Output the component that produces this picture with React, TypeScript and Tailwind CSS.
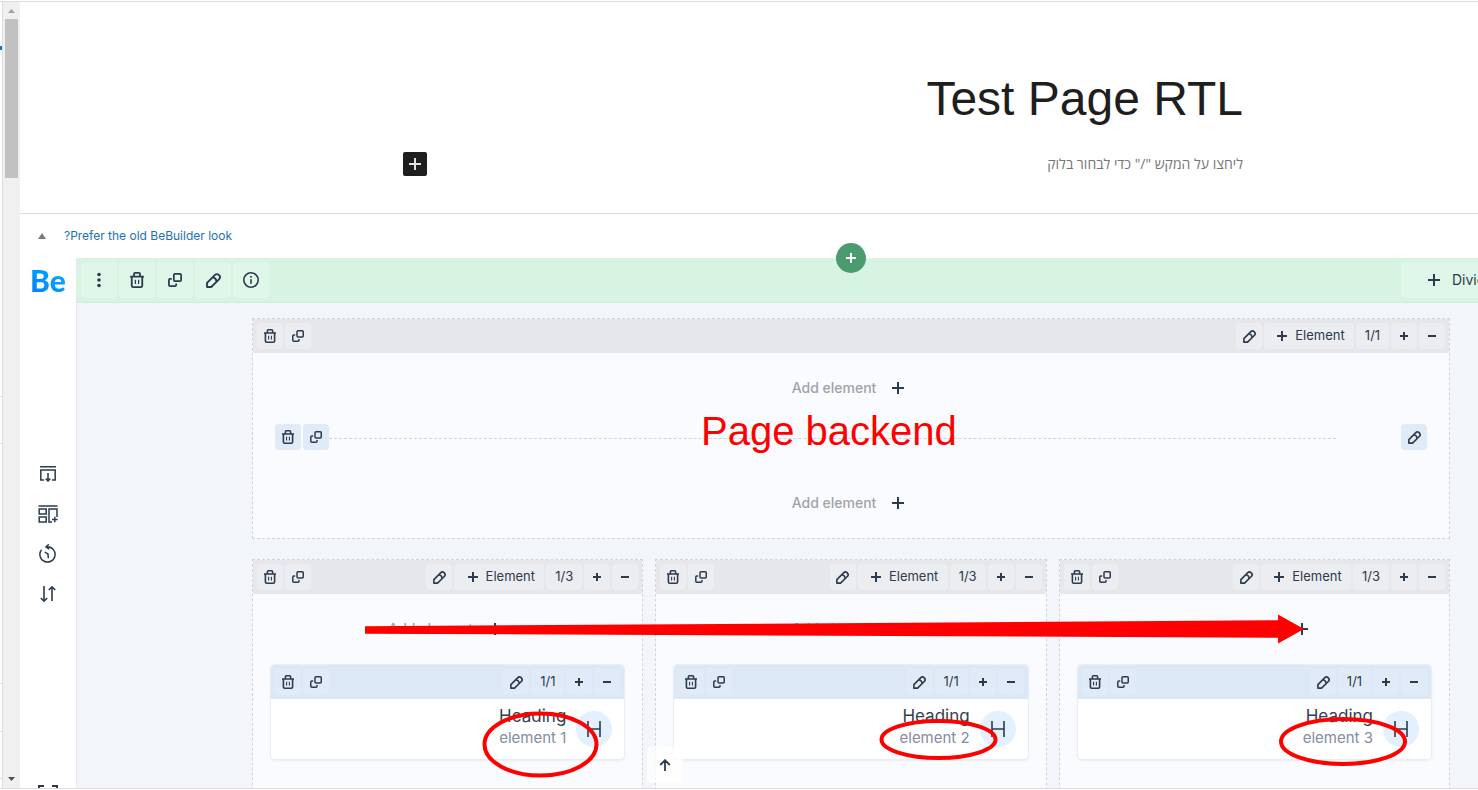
import type { ReactNode } from 'react';

type Tone = 'green' | 'gray' | 'blue';

const toneClasses: Record<Tone, string> = {
  green: 'h-9 w-9 rounded bg-[#dff7e9]',
  gray: 'h-[26px] w-[26px] rounded bg-[#ecedf1]',
  blue: 'h-[26px] w-[26px] rounded bg-[#e1ebf8]',
};

const columns = [1, 2, 3];

function Trash({ size = 14 }: { size?: number }) {
  return (
    <svg width={size} height={size} viewBox="0 0 14 14" fill="none" stroke="currentColor" strokeWidth="1.6">
      <path d="M1 4h12M4.4 4V1.7q0-.9.9-.9h3.4q.9 0 .9.9V4" />
      <path d="M2.4 4v8q0 1.2 1.3 1.2h6.6q1.3 0 1.3-1.2V4" />
      <path d="M5.6 6.8v3.6M8.4 6.8v3.6" strokeWidth="1.1" />
    </svg>
  );
}

function Clone({ size = 12 }: { size?: number }) {
  return (
    <svg width={size} height={size} viewBox="0 0 12 12" fill="none" stroke="currentColor" strokeWidth="1.5">
      <rect x="5" y=".75" width="6.25" height="6.25" rx="1" />
      <path d="M3.2 5H1.8q-1 0-1 1v4.2q0 1 1 1H6q1 0 1-1V9" />
    </svg>
  );
}

function Pencil({ size = 13 }: { size?: number }) {
  return (
    <svg width={size} height={size} viewBox="0 0 12 12" fill="none" stroke="currentColor" strokeWidth="1.5" strokeLinejoin="round">
      <path d="M.8 11.2V7.9L7 1.7q1.7-1.7 3.4 0t0 3.4L4.2 11.2Z" />
      <path d="M5.4 3.5q2.6.3 3 3.2" />
    </svg>
  );
}

function Plus({ size = 10 }: { size?: number }) {
  return (
    <svg width={size} height={size} viewBox={`0 0 ${size} ${size}`} stroke="currentColor" strokeWidth="2" className="shrink-0">
      <path d={`M0 ${size / 2}h${size}M${size / 2} 0v${size}`} />
    </svg>
  );
}

function Minus() {
  return (
    <svg width="8" height="8" viewBox="0 0 8 8" stroke="currentColor" strokeWidth="2">
      <path d="M0 4h8" />
    </svg>
  );
}

function ToolButton({ tone, label, children }: { tone: Tone; label: string; children: ReactNode }) {
  return (
    <button type="button" aria-label={label} className={`flex shrink-0 items-center justify-center ${toneClasses[tone]}`}>
      {children}
    </button>
  );
}

function AddElement() {
  return (
    <div className="flex h-[70px] items-center justify-center">
      <button type="button" className="flex items-center gap-4 pr-1.5 text-sm font-medium text-[#9ea3ac]">
        Add element
        <span className="text-[#2c3b4d]">
          <Plus size={12} />
        </span>
      </button>
    </div>
  );
}

function Toolbar({ tone, size, withElement }: { tone: 'gray' | 'blue'; size: string; withElement?: boolean }) {
  return (
    <div className={`flex h-[34px] items-center justify-between px-1 ${tone === 'gray' ? 'bg-[#e6e7ea]' : 'rounded-t bg-[#dce8f6]'}`}>
      <div className="flex gap-0.5">
        <ToolButton tone={tone} label="Delete"><Trash /></ToolButton>
        <ToolButton tone={tone} label="Clone"><Clone /></ToolButton>
      </div>
      <div className="flex gap-0.5 text-[13px]">
        <ToolButton tone={tone} label="Edit"><Pencil /></ToolButton>
        {withElement && (
          <button type="button" className="flex h-[26px] w-[90px] items-center justify-center gap-2 rounded bg-[#ecedf1] pl-1">
            <Plus />
            Element
          </button>
        )}
        <span className={`flex h-[26px] items-center justify-center rounded ${size === '1/3' ? 'w-9' : 'w-[33px]'} ${tone === 'gray' ? 'bg-[#ecedf1]' : 'bg-[#e1ebf8]'}`}>
          {size}
        </span>
        <ToolButton tone={tone} label="Increase"><Plus size={8} /></ToolButton>
        <ToolButton tone={tone} label="Decrease"><Minus /></ToolButton>
      </div>
    </div>
  );
}

function HeadingCard({ index }: { index: number }) {
  return (
    <div className="mx-[18px] mt-px rounded bg-white shadow-sm ring-1 ring-[#e9edf5]">
      <Toolbar tone="blue" size="1/1" />
      <div className="flex h-[60px] items-center justify-end gap-2.5 px-3">
        <div className="pb-1 text-right leading-[22px]">
          <h3 className="text-[17px] leading-[22px] text-[#34404f]">Heading</h3>
          <p className="text-[15px] leading-[22px] text-[#848ba3]">element {index}</p>
        </div>
        <span className="flex h-9 w-9 items-center justify-center rounded-full bg-[#e2f0ff]">
          <svg width="14" height="16" viewBox="0 0 14 16" fill="none" stroke="currentColor" strokeWidth="1.6">
            <path d="M1 0v16M13 0v16M1 8h12" />
          </svg>
        </span>
      </div>
    </div>
  );
}

function Sidebar() {
  return (
    <aside className="flex w-[57px] shrink-0 flex-col items-center border-r border-[#e6e8f1] bg-white">
      <span className="mt-1.5 flex h-8 items-center bg-linear-to-tr from-[#007cff] to-[#00b4ff] bg-clip-text font-[family-name:Lato,sans-serif] text-[30px] font-black text-transparent">
        Be
      </span>
      <nav className="mt-[168px] flex flex-col gap-5">
        <button type="button" aria-label="Add section" className="h-5 w-5">
          <svg width="20" height="20" viewBox="0 0 20 20" fill="none" stroke="currentColor" strokeWidth="1.5">
            <path d="M2 2.8h16M6 16H2.8V6h14.4v10H14M10 9v7.5M7.7 14.6l2.3 2.3 2.3-2.3" />
          </svg>
        </button>
        <button type="button" aria-label="Prebuilt sections" className="h-5 w-5">
          <svg width="20" height="20" viewBox="0 0 20 20" fill="none" stroke="currentColor" strokeWidth="1.5">
            <path d="M.5 2h19M1.2 5h7v5h-7ZM1.2 13h7v5h-7ZM14 18h-3V5h8v8M16.8 12.8v5.4M14 15.5h5.6" />
          </svg>
        </button>
        <button type="button" aria-label="History" className="h-5 w-5">
          <svg width="20" height="20" viewBox="0 0 20 20" fill="none" stroke="currentColor" strokeWidth="1.5">
            <path d="M3.6 5.6a7.6 7.6 0 1 0 5.8-2.8h-1M10.8.3 8 2.9l3.2 2.3M6.8 8.2 10 10l.3 4.2" />
          </svg>
        </button>
        <button type="button" aria-label="Import and export" className="h-5 w-5">
          <svg width="20" height="20" viewBox="0 0 20 20" fill="none" stroke="currentColor" strokeWidth="1.6">
            <path d="M6 2v15M2.8 14 6 17.2 9.2 14M14 17V3M10.8 6 14 2.8 17.2 6" />
          </svg>
        </button>
      </nav>
      <button type="button" aria-label="Fullscreen" className="mt-[181px] h-5 w-5 shrink-0">
        <svg width="20" height="20" viewBox="0 0 20 20" fill="none" stroke="currentColor" strokeWidth="2">
          <path d="M1 6V1h5M14 1h5v5M19 14v5h-5M6 19H1v-5" />
        </svg>
      </button>
    </aside>
  );
}

function Workspace() {
  return (
    <section className="min-w-0 flex-1 bg-[#f2f6fa]">
      <div className="flex h-[45px] items-center justify-between border-b border-[#cdeeda] bg-[#d7f3e1] pl-1">
        <div className="flex gap-0.5">
          <ToolButton tone="green" label="More">
            <svg width="4" height="16" viewBox="0 0 4 16" fill="currentColor">
              <circle cx="2" cy="2.5" r="1.8" />
              <circle cx="2" cy="8" r="1.8" />
              <circle cx="2" cy="13.5" r="1.8" />
            </svg>
          </ToolButton>
          <ToolButton tone="green" label="Delete"><Trash size={16} /></ToolButton>
          <ToolButton tone="green" label="Clone"><Clone size={14} /></ToolButton>
          <ToolButton tone="green" label="Edit"><Pencil size={15} /></ToolButton>
          <ToolButton tone="green" label="Info">
            <svg width="16" height="16" viewBox="0 0 16 16" fill="none" stroke="currentColor" strokeWidth="1.6">
              <circle cx="8" cy="8" r="7.2" />
              <path d="M8 7.2v4.6M8 4v1.7" />
            </svg>
          </ToolButton>
        </div>
        <div className="w-[77px] shrink-0 overflow-hidden">
          <button type="button" className="flex h-9 items-center gap-3 rounded bg-[#dff7e9] px-[27px] text-sm">
            <Plus size={12} />
            Divider
          </button>
        </div>
      </div>

      <div className="relative mr-7 ml-[175px] pt-[15px]">
        <button
          type="button"
          aria-label="Add section"
          className="absolute -top-[60px] left-1/2 flex h-[30px] w-[30px] -translate-x-1/2 items-center justify-center rounded-full bg-[#4a9b6f] text-white"
        >
          <Plus />
        </button>

        <div className="border border-dashed border-[#d0d3d7] bg-[#fafbfe]">
          <Toolbar tone="gray" size="1/1" withElement />
          <AddElement />
          <div className="mt-px mb-[18px] flex items-center px-[22px]">
            <div className="flex gap-0.5">
              <ToolButton tone="blue" label="Delete"><Trash /></ToolButton>
              <ToolButton tone="blue" label="Clone"><Clone /></ToolButton>
            </div>
            <hr className="mt-0.5 mr-[65px] flex-1 border-dashed border-[#d0d3d7]" />
            <ToolButton tone="blue" label="Edit"><Pencil /></ToolButton>
          </div>
          <AddElement />
        </div>

        <div className="mt-5 grid grid-cols-3 gap-3">
          {columns.map(n => (
            <div key={n} className="border border-dashed border-[#d0d3d7] bg-[#fafbfe] pb-20">
              <Toolbar tone="gray" size="1/3" withElement />
              <AddElement />
              <HeadingCard index={n} />
            </div>
          ))}
        </div>
      </div>
    </section>
  );
}

// red marks drawn over the builder
function Annotations() {
  return (
    <div className="pointer-events-none absolute inset-0">
      <svg className="absolute inset-0 h-full w-full" fill="none" stroke="#ff0000" strokeWidth="4">
        <path d="M365 626.3 1278 620.3V614.5L1304 629 1278 643.5V637.7L365 633.7Z" fill="#ff0000" stroke="none" />
        <ellipse cx="540.5" cy="744.5" rx="56" ry="31" />
        <ellipse cx="938.5" cy="739.5" rx="57" ry="18.5" />
        <ellipse cx="1343" cy="741.5" rx="62" ry="22.5" />
      </svg>
      <p className="absolute top-[408px] left-[701px] font-['Liberation_Sans',sans-serif] text-[40px] leading-[46px] text-[#ff0000]">
        Page backend
      </p>
    </div>
  );
}

export default function App() {
  return (
    <div className="relative h-screen overflow-hidden bg-white py-px font-['Inter',sans-serif] text-[#2c3b4d]">
      <div className="flex h-full overflow-hidden border-y border-[#dedede]">
        <div className="flex w-[3px] shrink-0 flex-col border-r border-[#dddddd]">
          <span className="mt-11 h-1 bg-[#007cba]" />
          <span className="mt-[346px] h-12 border-y border-[#dddddd]" />
          <span className="mt-[239px] h-12 border-t border-[#dddddd]" />
          <span className="h-12 border-y border-[#dddddd]" />
        </div>

        <div className="flex w-[17px] shrink-0 flex-col items-center bg-[#f0f0f0]">
          <svg width="7" height="4" viewBox="0 0 7 4" fill="#a3a3a3" className="mt-[7px]">
            <path d="M3.5 0 7 4H0Z" />
          </svg>
          <span className="mt-1.5 h-[159px] w-[13px] bg-[#c1c1c1]" />
          <svg width="7" height="4" viewBox="0 0 7 4" fill="#505050" className="mt-auto mb-[7px]">
            <path d="M0 0h7L3.5 4Z" />
          </svg>
        </div>

        <main className="flex min-w-0 flex-1 flex-col overflow-hidden">
          <header dir="rtl" className="shrink-0 border-b border-[#dddddd] pt-[69px] pr-[235px] pb-[37px] pl-[383px]">
            <h1 className="font-['Liberation_Sans',sans-serif] text-5xl leading-14 text-[#1e1e1e]">Test Page RTL</h1>
            <div className="mt-[25px] flex h-6 items-center justify-between">
              <p className="font-['Open_Sans',sans-serif] text-sm text-[#757575]">ליחצו על המקש "/" כדי לבחור בלוק</p>
              <button type="button" aria-label="Add block" className="flex h-6 w-6 items-center justify-center rounded-xs bg-[#1e1e1e] text-[#e0e0e0]">
                <Plus size={12} />
              </button>
            </div>
          </header>

          <div className="flex h-11 shrink-0 items-center gap-[18px] pl-[18px]">
            <svg width="8" height="6" viewBox="0 0 8 6" fill="#787c82">
              <path d="M4 0 8 6H0Z" />
            </svg>
            <a href="#" className="text-xs text-[#2271b1]">?Prefer the old BeBuilder look</a>
          </div>

          <div className="flex min-h-0 flex-1">
            <Sidebar />
            <Workspace />
          </div>
        </main>
      </div>

      <button
        type="button"
        aria-label="Back to top"
        className="absolute bottom-[7px] left-[45%] flex h-9 w-9 -translate-x-1/2 items-center justify-center rounded bg-white/70"
      >
        <svg width="12" height="12" viewBox="0 0 12 12" fill="none" stroke="currentColor" strokeWidth="1.8">
          <path d="M6 12V1.4M1.2 6 6 1.2 10.8 6" />
        </svg>
      </button>

      <Annotations />
    </div>
  );
}
